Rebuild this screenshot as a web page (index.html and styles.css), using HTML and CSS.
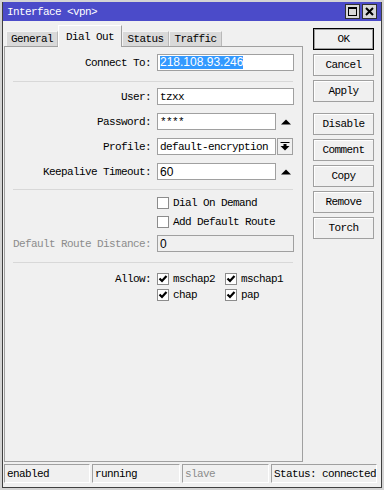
FILE: index.html
```html
<!doctype html>
<html>
  <head>
    <title>Interface &lt;vpn&gt;</title>
    <meta charset="utf-8">
    <link rel="stylesheet" href="styles.css">
  </head>
  <body>
    <div class="window">
      <div class="frame">
        <div class="titlebar">
          <span class="title">Interface &lt;vpn&gt;</span>
          <div class="title-btns">
            <span class="tbtn">
              <svg width="13" height="13" viewBox="0 0 13 13"><rect x="2.5" y="2.5" width="8" height="8" fill="none" stroke="#000"/><rect x="2" y="2" width="9" height="2" fill="#000"/></svg>
            </span>
            <span class="tbtn">
              <svg width="13" height="13" viewBox="0 0 13 13"><path d="M3 3 L10 10 M10 3 L3 10" stroke="#000" stroke-width="2"/></svg>
            </span>
          </div>
        </div>

        <div class="body">
          <div class="main">
            <div class="tabs">
              <div class="tab tab-general">General</div>
              <div class="tab tab-dialout active">Dial Out</div>
              <div class="tab tab-status">Status</div>
              <div class="tab tab-traffic">Traffic</div>
            </div>
            <div class="panel">
              <div class="row r-connect">
                <label class="lbl">Connect To:</label>
                <div class="field wide"><span class="sel">218.108.93.246</span></div>
              </div>
              <div class="sep s1"></div>
              <div class="row r-user">
                <label class="lbl">User:</label>
                <div class="field wide">tzxx</div>
              </div>
              <div class="row r-next">
                <label class="lbl">Password:</label>
                <div class="field short">****</div>
                <svg class="arrow" width="10" height="6" viewBox="0 0 10 6"><polygon points="0,5.5 10,5.5 5,0.5" fill="#000"/></svg>
              </div>
              <div class="row r-next">
                <label class="lbl">Profile:</label>
                <div class="field short">default-encryption</div>
                <div class="dropbtn">
                  <svg width="10" height="9" viewBox="0 0 10 9"><rect x="0.5" y="0" width="9" height="1" fill="#000"/><rect x="3.5" y="2" width="3" height="2" fill="#000"/><polygon points="0.5,4 9.5,4 5,8.5" fill="#000"/></svg>
                </div>
              </div>
              <div class="row r-next">
                <label class="lbl">Keepalive Timeout:</label>
                <div class="field short"><span class="num">60</span></div>
                <svg class="arrow" width="10" height="6" viewBox="0 0 10 6"><polygon points="0,5.5 10,5.5 5,0.5" fill="#000"/></svg>
              </div>
              <div class="sep s2"></div>
              <div class="row crow r-dial">
                <span class="lbl"></span>
                <span class="cb"></span><span class="cbtext">Dial On Demand</span>
              </div>
              <div class="row crow r-route">
                <span class="lbl"></span>
                <span class="cb"></span><span class="cbtext">Add Default Route</span>
              </div>
              <div class="row r-dist">
                <label class="lbl muted">Default Route Distance:</label>
                <div class="field wide disabled"><span class="num">0</span></div>
              </div>
              <div class="sep s3"></div>
              <div class="row crow r-allow1">
                <label class="lbl">Allow:</label>
                <span class="citem"><span class="cb checked"><svg width="10" height="10" viewBox="0 0 10 10"><path d="M1.5 4.5 L4 7 L8.5 2" fill="none" stroke="#000" stroke-width="2.2"/></svg></span><span class="cbtext">mschap2</span></span>
                <span class="citem"><span class="cb checked"><svg width="10" height="10" viewBox="0 0 10 10"><path d="M1.5 4.5 L4 7 L8.5 2" fill="none" stroke="#000" stroke-width="2.2"/></svg></span><span class="cbtext">mschap1</span></span>
              </div>
              <div class="row crow r-allow2">
                <span class="lbl"></span>
                <span class="citem"><span class="cb checked"><svg width="10" height="10" viewBox="0 0 10 10"><path d="M1.5 4.5 L4 7 L8.5 2" fill="none" stroke="#000" stroke-width="2.2"/></svg></span><span class="cbtext">chap</span></span>
                <span class="citem"><span class="cb checked"><svg width="10" height="10" viewBox="0 0 10 10"><path d="M1.5 4.5 L4 7 L8.5 2" fill="none" stroke="#000" stroke-width="2.2"/></svg></span><span class="cbtext">pap</span></span>
              </div>
            </div>
          </div>

          <div class="side">
            <div class="btn default">OK</div>
            <div class="btn">Cancel</div>
            <div class="btn">Apply</div>
            <div class="btn group">Disable</div>
            <div class="btn">Comment</div>
            <div class="btn">Copy</div>
            <div class="btn">Remove</div>
            <div class="btn">Torch</div>
          </div>
        </div>

        <div class="statusbar">
          <div class="cell c1">enabled</div>
          <div class="cell c2">running</div>
          <div class="cell c3 muted">slave</div>
          <div class="cell c4">Status: connected</div>
        </div>
      </div>
    </div>
  </body>
</html>
```

FILE: styles.css
```css
body {
  margin: 0;
  background: #f0f0f0;
  font-family: "Liberation Mono", "DejaVu Sans Mono", monospace;
  font-size: 11px;
  letter-spacing: -0.6px;
  color: #000;
}
.window {
  width: 384px;
  height: 490px;
  box-sizing: border-box;
  border: 2px solid #d4d4d4;
}
.frame {
  height: 100%;
  box-sizing: border-box;
  border: 1px solid #404040;
  border-top: 0;
  display: flex;
  flex-direction: column;
  background: #f0f0f0;
}

/* title bar */
.titlebar {
  height: 19px;
  flex: none;
  background: #4b4bc9;
  color: #fff;
  display: flex;
  align-items: center;
  justify-content: space-between;
  padding: 0 4px 0 4px;
}
.title-btns {
  display: flex;
  gap: 2px;
}
.tbtn {
  width: 15px;
  height: 15px;
  box-sizing: border-box;
  border: 1px solid #303030;
  background: #d8d8d8;
  display: flex;
  align-items: center;
  justify-content: center;
}

.body {
  flex: 1;
  display: flex;
}
.main {
  width: 299px;
  margin-left: 1px;
  display: flex;
  flex-direction: column;
}

/* tabs */
.tabs {
  height: 25px;
  flex: none;
  display: flex;
  align-items: flex-end;
  padding-left: 2px;
}
.tab {
  height: 15px;
  box-sizing: border-box;
  background: #d9d9d9;
  border-top: 1px solid #f4f4f4;
  border-left: 1px solid #f4f4f4;
  border-right: 1px solid #b8b8b8;
  display: flex;
  align-items: center;
  justify-content: center;
}
.tab.active {
  height: 22px;
  margin-bottom: -1px;
  background: #f0f0f0;
  border-top: 1px solid #fff;
  border-left: 1px solid #fff;
  border-right: 1px solid #a0a0a0;
  align-items: flex-start;
  padding-top: 5px;
  position: relative;
  z-index: 1;
}
.tab-general { width: 52px; }
.tab-dialout { width: 64px; }
.tab-status { width: 47px; }
.tab-traffic { width: 53px; }

/* panel with the form */
.panel {
  flex: 1;
  border: 1px solid #a0a0a0;
  background: #f0f0f0;
}
.row {
  display: flex;
  align-items: center;
  height: 17px;
}
.lbl {
  width: 146px;
  flex: none;
  text-align: right;
  margin-right: 6px;
}
.muted {
  color: #8c8c8c;
}
.field {
  height: 17px;
  box-sizing: border-box;
  border: 1px solid #a0a0a0;
  background: #fff;
  padding-left: 2px;
  display: flex;
  align-items: center;
  white-space: nowrap;
  overflow: hidden;
}
.field.wide { width: 137px; }
.field.short { width: 119px; }
.field.disabled { background: #f0f0f0; }
.sel {
  background: #3399ff;
  color: #fff;
  font-family: "Liberation Sans", Arial, sans-serif;
  font-size: 12px;
  letter-spacing: 0;
  line-height: 13px;
}
.num {
  font-family: "Liberation Sans", Arial, sans-serif;
  font-size: 12px;
  letter-spacing: 0;
}
.arrow {
  margin-left: 5px;
}
.dropbtn {
  width: 16px;
  height: 17px;
  box-sizing: border-box;
  margin-left: 1px;
  border: 1px solid #a0a0a0;
  background: #f0f0f0;
  display: flex;
  align-items: center;
  justify-content: center;
}
.sep {
  height: 1px;
  background: #d8d8d8;
  margin: 0 9px 0 8px;
}
.r-connect { margin-top: 7px; }
.s1 { margin-top: 10px; }
.r-user { margin-top: 6px; }
.r-next { margin-top: 8px; }
.s2 { margin-top: 9px; }
.r-dial { margin-top: 6px; }
.r-route { margin-top: 6px; }
.r-dist { margin-top: 7px; }
.s3 { margin-top: 10px; }
.r-allow1 { margin-top: 9px; }
.r-allow2 { margin-top: 3px; }
.crow { height: 13px; }

.cb {
  width: 12px;
  height: 12px;
  box-sizing: border-box;
  flex: none;
  border: 1px solid #8c8c8c;
  background: #fff;
  display: flex;
  align-items: center;
  justify-content: center;
}
.cbtext {
  margin-left: 4px;
}
.citem {
  width: 68px;
  display: flex;
  align-items: center;
}

/* buttons on the right */
.side {
  width: 61px;
  margin-left: 10px;
  padding-top: 7px;
}
.btn {
  height: 22px;
  box-sizing: border-box;
  margin-bottom: 4px;
  border: 1px solid #a0a0a0;
  background: #f0f0f0;
  box-shadow: inset 1px 1px 0 #fff;
  display: flex;
  align-items: center;
  justify-content: center;
}
.btn.default {
  border-color: #000;
  box-shadow: inset 0 0 0 1px #a0a0a0;
}
.btn.group {
  margin-top: 11px;
}

/* status bar */
.statusbar {
  height: 25px;
  flex: none;
  display: flex;
  gap: 2px;
  padding: 2px 0 0 1px;
  box-sizing: border-box;
}
.cell {
  height: 19px;
  box-sizing: border-box;
  border: 1px solid;
  border-color: #a0a0a0 #fff #fff #a0a0a0;
  padding-left: 2px;
  display: flex;
  align-items: center;
  white-space: nowrap;
}
.c1 { width: 86px; }
.c2 { width: 88px; }
.c3 { width: 87px; }
.c4 { width: 106px; }
```
